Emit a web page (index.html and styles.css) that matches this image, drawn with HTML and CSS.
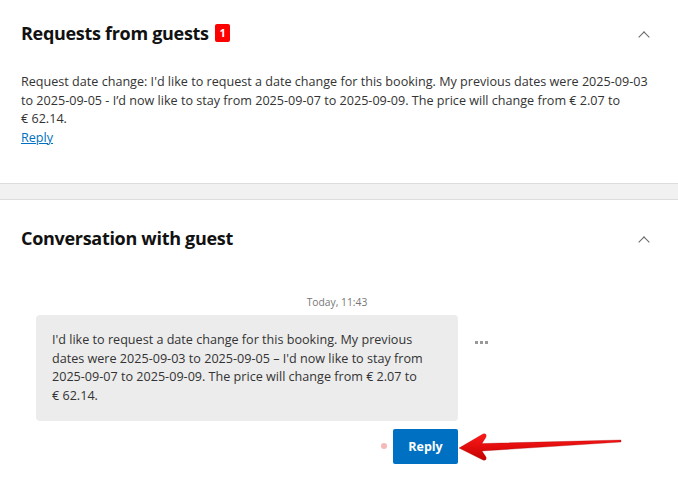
FILE: index.html
```html
<!DOCTYPE html>
<html lang="en">
<head>
    <meta charset="UTF-8">
    <title>Guest requests</title>
    <link rel="stylesheet" href="styles.css">
</head>
<body>

    <section class="panel">
        <div class="panel-head">
            <h2>Requests from guests <span class="badge">1</span></h2>
            <span class="chevron"></span>
        </div>
        <p class="request">Request date change: I'd like to request a date change for this booking. My previous dates were 2025-09-03 to 2025-09-05 - I’d now like to stay from 2025-09-07 to 2025-09-09. The price will change from €&nbsp;2.07 to €&nbsp;62.14.<br><a href="#">Reply</a></p>
    </section>

    <div class="divider"></div>

    <section class="panel convo">
        <div class="panel-head">
            <h2>Conversation with guest</h2>
            <span class="chevron"></span>
        </div>

        <div class="thread">
            <div class="stamp">Today, 11:43</div>
            <div class="msg-row">
                <div class="bubble">I'd like to request a date change for this booking. My previous dates were 2025-09-03 to 2025-09-05 – I'd now like to stay from 2025-09-07 to 2025-09-09. The price will change from €&nbsp;2.07 to €&nbsp;62.14.</div>
                <div class="more"><i></i><i></i><i></i></div>
            </div>
            <div class="reply-row">
                <span class="dot"></span>
                <button class="reply-btn">Reply</button>
                <svg class="arrow" width="176" height="34" viewBox="0 0 176 34">
                    <defs>
                        <linearGradient id="ar" x1="0" y1="0" x2="0" y2="1">
                            <stop offset="0" stop-color="#ff1a1a"/>
                            <stop offset="1" stop-color="#c40000"/>
                        </linearGradient>
                    </defs>
                    <path d="M2 18 L26 4 Q30 3 29 7 L25 13.5 L164 10 L164 12 L25 21 L29 27 Q30 31 26 30 Z" fill="url(#ar)" stroke="#a00000" stroke-width="0.6" stroke-opacity="0.5"/>
                </svg>
            </div>
        </div>
    </section>

</body>
</html>
```

FILE: styles.css
```css
body {
    margin: 0;
    font-family: 'Open Sans', 'Noto Sans', sans-serif;
    color: #333;
    background: #fff;
}
.panel {
    padding: 21px 21px 0 21px;
}
.panel-head {
    display: flex;
    align-items: center;
    justify-content: space-between;
}
h2 {
    margin: 0;
    font-size: 18px;
    line-height: 24px;
    font-weight: 700;
    color: #111;
    letter-spacing: -0.3px;
}
.badge {
    display: inline-block;
    background: #f00;
    color: #fff;
    font-size: 11px;
    line-height: 18px;
    width: 15px;
    margin-left: 2px;
    text-align: center;
    border-radius: 2px;
    vertical-align: 3px;
    letter-spacing: 0;
}
.chevron {
    width: 7px;
    height: 7px;
    border-left: 1.3px solid #666;
    border-top: 1.3px solid #666;
    transform: rotate(45deg);
    margin: 7px 9px 0 0;
}
.request {
    margin: 28px 0 0;
    padding-bottom: 36px;
    font-size: 12.6px;
    line-height: 18.5px;
    max-width: 628px;
}
.request a {
    color: #0071c2;
}
.divider {
    height: 15px;
    background: #f1f1f1;
    border-top: 1px solid #ddd;
    border-bottom: 1px solid #ddd;
}
.convo {
    padding-top: 26px;
}
.thread {
    padding: 45px 0 0 15px;
    position: relative;
}
.stamp {
    width: 422px;
    margin-left: 90px;
    font-size: 10.3px;
    color: #777;
    text-align: center;
    line-height: 14px;
    margin-bottom: 6px;
}
.msg-row {
    display: flex;
    align-items: flex-start;
}
.bubble {
    width: 390px;
    padding: 16px 16px 15px;
    background: #ececec;
    border-radius: 4px;
    font-size: 12.6px;
    line-height: 18.7px;
}
.more {
    display: flex;
    gap: 2.5px;
    margin: 26px 0 0 17px;
}
.more i {
    width: 2.5px;
    height: 2.5px;
    background: #999;
}
.reply-row {
    display: flex;
    align-items: center;
    width: 422px;
    justify-content: flex-end;
    margin-top: 8px;
    position: relative;
}
.dot {
    width: 6px;
    height: 6px;
    border-radius: 50%;
    background: #f6b8b8;
    margin-right: 6px;
}
.reply-btn {
    background: #0071c2;
    color: #fff;
    border: none;
    border-radius: 2px;
    width: 65px;
    height: 35px;
    font-family: inherit;
    font-size: 12.5px;
    font-weight: 700;
}
.arrow {
    position: absolute;
    left: 421px;
    top: 1px;
}
```
